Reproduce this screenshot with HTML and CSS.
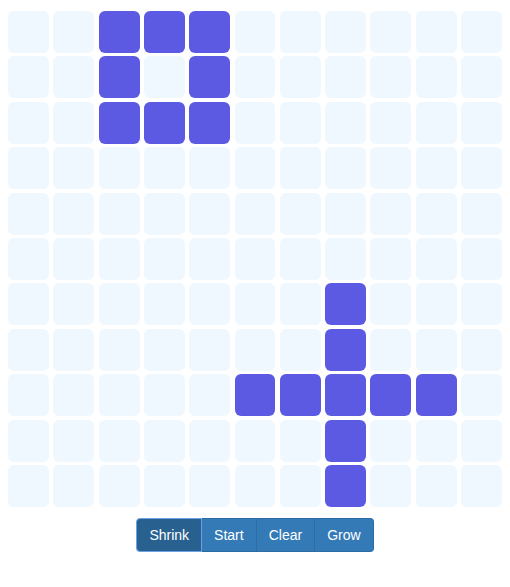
FILE: index.html
```
<!DOCTYPE html>
<html>
<head>
<meta charset="utf-8">
<link rel="stylesheet" href="styles.css">
</head>
<body>
<div class="board">
<div class="cell"></div><div class="cell"></div><div class="cell on"></div><div class="cell on"></div><div class="cell on"></div><div class="cell"></div><div class="cell"></div><div class="cell"></div><div class="cell"></div><div class="cell"></div><div class="cell"></div>
<div class="cell"></div><div class="cell"></div><div class="cell on"></div><div class="cell"></div><div class="cell on"></div><div class="cell"></div><div class="cell"></div><div class="cell"></div><div class="cell"></div><div class="cell"></div><div class="cell"></div>
<div class="cell"></div><div class="cell"></div><div class="cell on"></div><div class="cell on"></div><div class="cell on"></div><div class="cell"></div><div class="cell"></div><div class="cell"></div><div class="cell"></div><div class="cell"></div><div class="cell"></div>
<div class="cell"></div><div class="cell"></div><div class="cell"></div><div class="cell"></div><div class="cell"></div><div class="cell"></div><div class="cell"></div><div class="cell"></div><div class="cell"></div><div class="cell"></div><div class="cell"></div>
<div class="cell"></div><div class="cell"></div><div class="cell"></div><div class="cell"></div><div class="cell"></div><div class="cell"></div><div class="cell"></div><div class="cell"></div><div class="cell"></div><div class="cell"></div><div class="cell"></div>
<div class="cell"></div><div class="cell"></div><div class="cell"></div><div class="cell"></div><div class="cell"></div><div class="cell"></div><div class="cell"></div><div class="cell"></div><div class="cell"></div><div class="cell"></div><div class="cell"></div>
<div class="cell"></div><div class="cell"></div><div class="cell"></div><div class="cell"></div><div class="cell"></div><div class="cell"></div><div class="cell"></div><div class="cell on"></div><div class="cell"></div><div class="cell"></div><div class="cell"></div>
<div class="cell"></div><div class="cell"></div><div class="cell"></div><div class="cell"></div><div class="cell"></div><div class="cell"></div><div class="cell"></div><div class="cell on"></div><div class="cell"></div><div class="cell"></div><div class="cell"></div>
<div class="cell"></div><div class="cell"></div><div class="cell"></div><div class="cell"></div><div class="cell"></div><div class="cell on"></div><div class="cell on"></div><div class="cell on"></div><div class="cell on"></div><div class="cell on"></div><div class="cell"></div>
<div class="cell"></div><div class="cell"></div><div class="cell"></div><div class="cell"></div><div class="cell"></div><div class="cell"></div><div class="cell"></div><div class="cell on"></div><div class="cell"></div><div class="cell"></div><div class="cell"></div>
<div class="cell"></div><div class="cell"></div><div class="cell"></div><div class="cell"></div><div class="cell"></div><div class="cell"></div><div class="cell"></div><div class="cell on"></div><div class="cell"></div><div class="cell"></div><div class="cell"></div>
</div>
<div class="controls">
<div class="btn-group">
<button class="btn active">Shrink</button><button class="btn">Start</button><button class="btn">Clear</button><button class="btn last">Grow</button>
</div>
</div>
</body>
</html>
```
FILE: styles.css
```
body {
  margin: 8px;
  font-family: "Liberation Sans", Arial, sans-serif;
  background: #fff;
}
.board {
  display: grid;
  grid-template-columns: repeat(11, 1fr);
  grid-auto-rows: 42px;
  column-gap: 4.4px;
  row-gap: 3.4px;
  margin-top: 3px;
}
.cell {
  background: #eff7ff;
  border-radius: 6px;
}
.cell.on {
  background: #5c5ae2;
}
.controls {
  display: flex;
  justify-content: center;
  margin-top: 11px;
}
.btn-group {
  display: flex;
}
.btn {
  font-family: "Liberation Sans", Arial, sans-serif;
  font-size: 14px;
  line-height: 20px;
  padding: 6px 12px;
  color: #fff;
  background: #337ab7;
  border: 1px solid #2e6da4;
  border-left-width: 0;
  margin: 0;
  cursor: pointer;
}
.btn.active {
  background: #286090;
  border: 1px solid #6aa2e6;
  border-radius: 4px 0 0 4px;
}
.btn.last {
  border-radius: 0 4px 4px 0;
}
```
